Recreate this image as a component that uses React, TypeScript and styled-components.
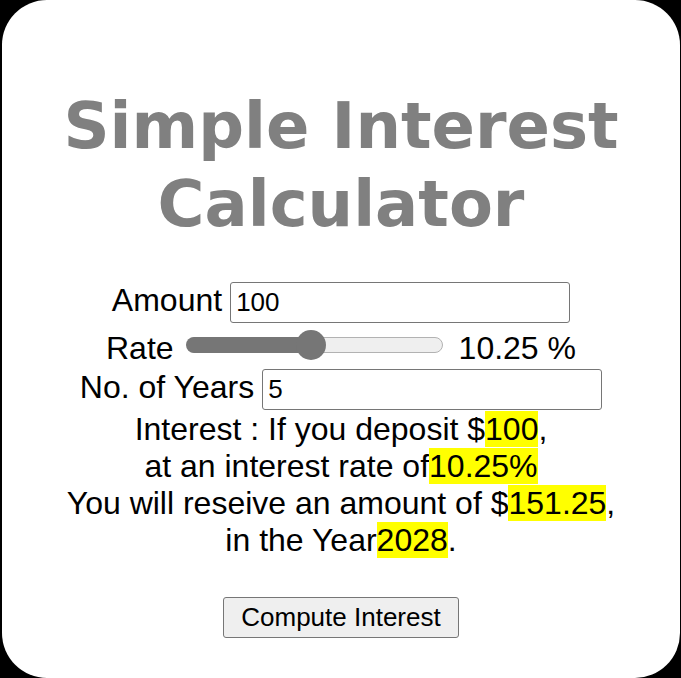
import React, {useState} from 'react';
import styled, {createGlobalStyle} from 'styled-components';

const GlobalStyle = createGlobalStyle`
  html, body {
    margin: 0;
    padding: 0;
    background: #000;
  }
  body {
    font-family: 'Liberation Sans', Arial, sans-serif;
    color: #000;
  }
`;

const Card = styled.div`
  width: 678px;
  height: 678px;
  margin-left: 2px;
  padding-top: 87px;
  box-sizing: border-box;
  background: #fff;
  border-radius: 45px;
  display: flex;
  flex-direction: column;
  align-items: center;
  overflow: hidden;
`;

const Title = styled.h1`
  margin: 0;
  font-family: 'DejaVu Sans', Verdana, sans-serif;
  font-weight: bold;
  font-size: 64px;
  line-height: 78px;
  color: #808080;
  text-align: center;
`;

const Form = styled.div`
  margin-top: 39px;
  display: flex;
  flex-direction: column;
  align-items: center;
  font-size: 32px;
`;

const Row = styled.div<{$top?: number; $center?: boolean}>`
  display: flex;
  align-items: ${(p) => (p.$center ? 'center' : 'baseline')};
  gap: 8px;
  margin-top: ${(p) => p.$top || 0}px;
`;

const Label = styled.span`
  white-space: nowrap;
`;

const TextInput = styled.input`
  width: 340px;
  height: 41px;
  box-sizing: border-box;
  border: 1px solid #767676;
  border-radius: 3px;
  padding: 0 5px;
  font-family: 'Liberation Sans', Arial, sans-serif;
  font-size: 26px;
  color: #000;
  background: #fff;
  outline: none;
`;

const SliderWrap = styled.div`
  display: flex;
  gap: 16px;
  align-items: center;
`;

const Track = styled.div`
  position: relative;
  width: 256px;
  height: 16px;
  margin-left: 5px;
  margin-bottom: 7px;
  box-sizing: border-box;
  border: 1.5px solid #b2b2b2;
  border-radius: 8px;
  background: #efefef;
  cursor: pointer;
`;

const Fill = styled.div`
  position: absolute;
  left: -1.5px;
  top: -1.5px;
  height: 16px;
  border-radius: 8px;
  background: #767676;
`;

const Thumb = styled.div`
  position: absolute;
  top: 50%;
  width: 30px;
  height: 30px;
  margin-left: -15px;
  margin-top: -15px;
  border-radius: 50%;
  background: #767676;
`;

const Result = styled.div`
  margin-top: 1px;
  text-align: center;
  line-height: normal;
`;

const Line = styled.div`
  white-space: nowrap;
`;

const Mark = styled.mark`
  background: #ffff00;
  color: #000;
`;

const Button = styled.button`
  margin-top: 38px;
  height: 41px;
  padding: 0 17px;
  border: 1px solid #767676;
  border-radius: 3px;
  background: #efefef;
  font-family: 'Liberation Sans', Arial, sans-serif;
  font-size: 26px;
  color: #000;
  cursor: pointer;
`;

const MIN = 1;
const MAX = 20;
const BASE_YEAR = 2023;

export default function App() {
  const [amount, setAmount] = useState('100');
  const [rate, setRate] = useState(10.25);
  const [years, setYears] = useState('5');
  const [result, setResult] = useState({amount: 100, rate: 10.25, total: 151.25, year: 2028});

  const pct = (rate - MIN) / (MAX - MIN);
  const thumbX = 15 + pct * (256 - 30);

  const compute = () => {
    const p = Number(amount) || 0;
    const n = Number(years) || 0;
    const total = p + (p * rate * n) / 100;
    setResult({amount: p, rate, total: Math.round(total * 100) / 100, year: BASE_YEAR + n});
  };

  const onTrack = (e: React.MouseEvent<HTMLDivElement>) => {
    const box = e.currentTarget.getBoundingClientRect();
    const f = Math.min(1, Math.max(0, (e.clientX - box.left - 15) / (box.width - 30)));
    setRate(Math.round((MIN + f * (MAX - MIN)) * 4) / 4);
  };

  return (
    <>
      <GlobalStyle />
      <Card>
        <Title>
          Simple Interest
          <br />
          Calculator
        </Title>
        <Form>
          <Row>
            <Label>Amount</Label>
            <TextInput value={amount} onChange={(e) => setAmount(e.target.value)} />
          </Row>
          <Row $top={7} $center>
            <Label>Rate</Label>
            <SliderWrap>
              <Track onClick={onTrack}>
                <Fill style={{width: thumbX + 1.5}} />
                <Thumb style={{left: thumbX - 1.5}} />
              </Track>
              <Label>{rate} %</Label>
            </SliderWrap>
          </Row>
          <Row $top={2}>
            <Label>No. of Years</Label>
            <TextInput value={years} onChange={(e) => setYears(e.target.value)} />
          </Row>
          <Result>
            <Line>
              Interest : If you deposit $<Mark>{result.amount}</Mark>,
            </Line>
            <Line>
              at an interest rate of<Mark>{result.rate}%</Mark>
            </Line>
            <Line>
              You will reseive an amount of $<Mark>{result.total}</Mark>,
            </Line>
            <Line>
              in the Year<Mark>{result.year}</Mark>.
            </Line>
          </Result>
          <Button onClick={compute}>Compute Interest</Button>
        </Form>
      </Card>
    </>
  );
}
